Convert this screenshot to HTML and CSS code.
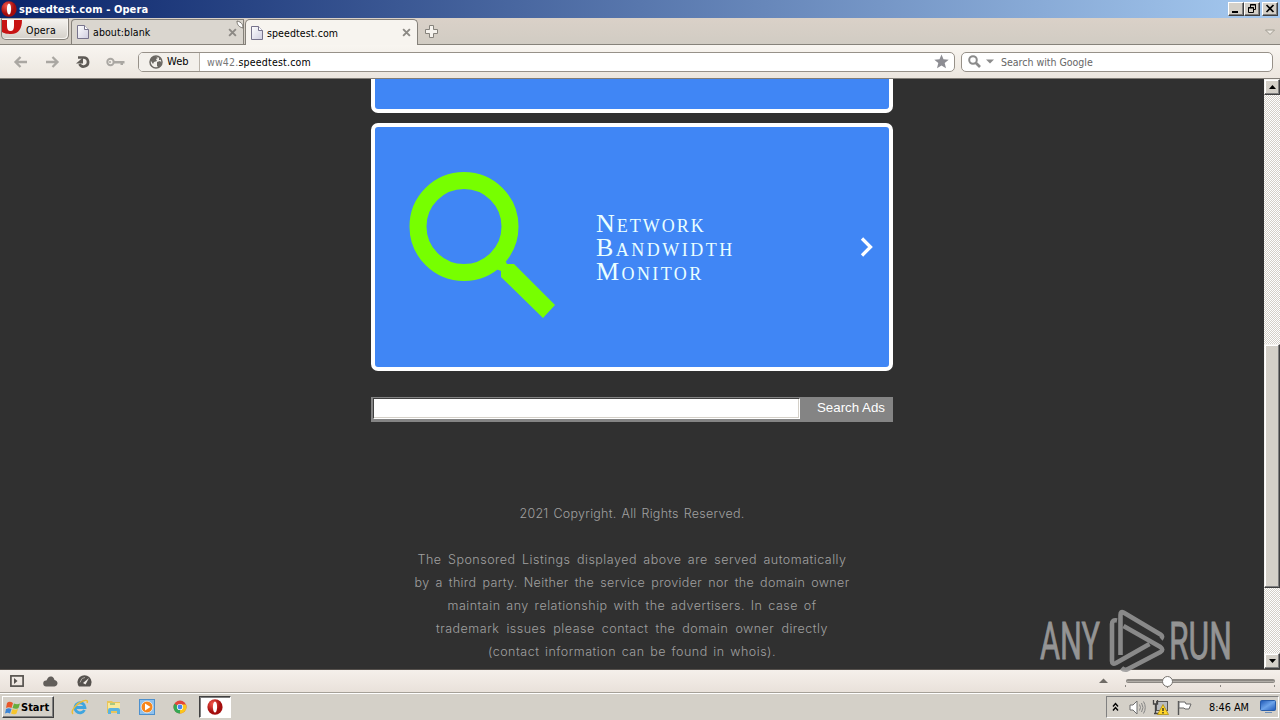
FILE: index.html
```
<!DOCTYPE html>
<html lang="en">
<head>
<meta charset="utf-8">
<title>speedtest.com - Opera</title>
<link rel="stylesheet" href="styles.css">
</head>
<body>
<svg class="defs" width="0" height="0">
  <defs>
    <radialGradient id="red" cx="35%" cy="30%"><stop offset="0" stop-color="#f5584c"/><stop offset="1" stop-color="#a40d0d"/></radialGradient>
    <linearGradient id="page" x2="1" y2="1"><stop offset="0" stop-color="#fff"/><stop offset="1" stop-color="#cfcde0"/></linearGradient>
    <linearGradient id="screen" x2="1" y2="1"><stop offset="0" stop-color="#1c55b4"/><stop offset=".5" stop-color="#6da4ea"/><stop offset="1" stop-color="#1d56b8"/></linearGradient>
    <symbol id="opera" viewBox="0 0 16 16"><ellipse cx="8" cy="8" rx="7.6" ry="7.8" fill="url(#red)"/><ellipse cx="8" cy="8" rx="2.1" ry="5.5" fill="#fff"/></symbol>
    <symbol id="doc" viewBox="0 0 12 14"><path d="M.5.5h7l4 4v9H.5z" fill="url(#page)" stroke="#77738c"/><path d="M7.5.5v4h4" fill="#fff" stroke="#77738c"/></symbol>
    <symbol id="close" viewBox="0 0 8 8"><path d="M1 1l6 6M7 1L1 7" stroke="#8c8984" stroke-width="1.7"/></symbol>
  </defs>
</svg>
<div class="screen">
  <header class="titlebar">
    <svg class="title-logo" width="16" height="16"><use href="#opera"/></svg>
    <span class="title-text">speedtest.com - Opera</span>
    <div class="win-buttons">
      <span class="win-btn"><svg width="14" height="11"><path d="M3 9h6" stroke="#000" stroke-width="2"/></svg></span>
      <span class="win-btn"><svg width="14" height="11"><path d="M5.500 4.500v-3h5v5h-2M5 2h6" fill="none" stroke="#000"/><path d="M3.500 4.500h5v5h-5zM3 5h6" fill="none" stroke="#000"/></svg></span>
      <span class="win-btn last"><svg width="14" height="11"><path d="M3.500 2l7 7M10.500 2l-7 7" stroke="#000" stroke-width="1.700"/></svg></span>
    </div>
  </header>

  <nav class="tabs">
    <div class="menu-btn"><svg width="22" height="17"><path d="M0 0h20c0 8-3 14-11 14-4 0-8-1-9-2z" fill="#c81414"/><path d="M5 0h7v6c0 3-1 5-3.500 5S5 9 5 6z" fill="#fff"/></svg><span>Opera</span></div>
    <div class="tab tab-back"><svg width="12" height="14"><use href="#doc"/></svg><span>about:blank</span><svg class="x" width="9" height="9"><use href="#close"/></svg></div>
    <div class="tab tab-front"><svg width="12" height="14"><use href="#doc"/></svg><span>speedtest.com</span><svg class="x" width="9" height="9"><use href="#close"/></svg>
      <svg class="curl" width="8" height="9"><path d="M1 1c0 4 2 6 6 7 0-3-1-6-6-7z" fill="#fff" stroke="#77736c"/></svg></div>
    <svg class="plus" width="13" height="13"><path d="M4.500.500h4v4h4v4h-4v4h-4v-4h-4v-4h4z" fill="#f6f3ee" stroke="#85827b"/></svg>
    <svg class="closed-tabs" width="10" height="7"><path d="M.500 1h9L5 5.500z" fill="#eeeae3" stroke="#a09c92"/></svg>
  </nav>

  <div class="toolbar">
    <div class="nav-icons">
      <svg width="16" height="14"><path d="M7.500 2L2.500 7l5 5M3 7h11" fill="none" stroke="#aaa7a2" stroke-width="2.300"/></svg>
      <svg width="16" height="14"><path d="M8.500 2l5 5-5 5M13 7H2" fill="none" stroke="#aaa7a2" stroke-width="2.300"/></svg>
      <svg width="16" height="14"><path d="M3 2.500h5.500a4.500 4.500 0 1 1-4 6.500" fill="none" stroke="#5e5a55" stroke-width="2.700"/><path d="M1 8.500h7v-6z" fill="#5e5a55"/></svg>
      <svg width="19" height="14"><circle cx="4.500" cy="7" r="3.200" fill="none" stroke="#aaa7a2" stroke-width="2"/><path d="M7 6h11.500v2.500H17V10h-2.500V8.500H7z" fill="#aaa7a2"/><circle cx="4" cy="7" r="1" fill="#aaa7a2"/></svg>
    </div>
    <div class="address">
      <div class="badge"><svg width="14" height="14"><circle cx="7" cy="7" r="6" fill="#f3f0eb" stroke="#6b6863" stroke-width="1.500"/><path d="M2 3l4-2 3 2-2 1 1 2-3 1-1 2-2-3zM8 7l3-1 2 2-3 5-2-2zM10 2l2 3-2 0z" fill="#6b6863"/></svg><span>Web</span></div>
      <div class="url"><span class="dim">ww42.</span>speedtest.com</div>
      <svg class="star" width="15" height="15"><path d="M7.500.500l2 4.800 5.200.400-4 3.400 1.300 5.200-4.500-2.800L3 14.300l1.300-5.200-4-3.400 5.200-.400z" fill="#8d8d93"/></svg>
    </div>
    <div class="search"><svg width="13" height="13"><circle cx="5" cy="5" r="3.800" fill="none" stroke="#8b8b8b" stroke-width="2"/><path d="M8 8l4 4" stroke="#8b8b8b" stroke-width="2.600"/></svg><svg class="drop" width="8" height="5"><path d="M0 .500h8l-4 4z" fill="#8b8b8b"/></svg><span>Search with Google</span></div>
  </div>

  <div class="viewport">
    <main class="page">
      <section class="card card-cut"></section>
      <section class="card card-main">
        <svg class="glass" width="148" height="148"><circle cx="55" cy="54.500" r="46" fill="none" stroke="#7f0" stroke-width="17"/><path d="M87 97l9-9 2 4h7l41 41-12 13-42-41v-6z" fill="#7f0"/></svg>
        <h2 class="card-title"><span class="t1">Network</span><span class="t2">Bandwidth</span><span class="t3">Monitor</span></h2>
        <svg class="chevron" width="14" height="20"><path d="M2 1.500l8.500 8.500L2 18.500" fill="none" stroke="#fff" stroke-width="3.300"/></svg>
      </section>
      <div class="ads"><div class="ads-input"></div><span>Search Ads</span></div>
      <footer class="legal">
        <p class="l0">2021 Copyright. All Rights Reserved.</p>
        <p class="l1">The Sponsored Listings displayed above are served automatically</p>
        <p class="l2">by a third party. Neither the service provider nor the domain owner</p>
        <p class="l3">maintain any relationship with the advertisers. In case of</p>
        <p class="l4">trademark issues please contact the domain owner directly</p>
        <p class="l5">(contact information can be found in whois).</p>
      </footer>
    </main>
    <aside class="scroll">
      <div class="sb-btn"><svg width="7" height="4"><path d="M0 4h7L3.500 0z"/></svg></div>
      <div class="track-top"></div>
      <div class="thumb"></div>
      <div class="track-bottom"></div>
      <div class="sb-btn"><svg width="7" height="4"><path d="M0 0h7L3.500 4z"/></svg></div>
    </aside>
  </div>

  <div class="status">
    <div class="status-icons">
      <svg width="14" height="12"><rect x=".900" y=".900" width="12.200" height="10.200" fill="none" stroke="#56524e" stroke-width="1.700"/><path d="M4 3v6l3.500-3z" fill="#56524e"/></svg>
      <svg width="15" height="11"><path d="M3.500 10.500a3 3 0 0 1-.500-6C4 5 4 1 7.500.500c3 0 3.500 2 4 3.500 4 .500 4 6 0 6.500z" fill="#625e5a"/></svg>
      <svg width="15" height="12"><path d="M2 11.500A7 7 0 1 1 13 11.500z" fill="#56524e"/><path d="M12 3L8.500 9.500 6 8z" fill="#f1ece7"/><path d="M3 7.500l2-4M5 3.500l3-1" stroke="#aaa59f"/></svg>
    </div>
    <svg class="zoom" width="190" height="22"><path d="M9 13h9l-4.500-4.500z" fill="#6f6b66"/><rect x="36" y="9" width="149" height="4" rx="2" fill="#8c8883"/><path d="M37 11.500h147" stroke="#b2aea8"/><path d="M35.500 15v2M77.500 16v2M130.500 15v2M184.500 15v2" stroke="#8c8883"/><circle cx="77.500" cy="11.500" r="5" fill="#fff" stroke="#77736e"/></svg>
  </div>

  <div class="taskbar">
    <div class="start"><svg width="16" height="15"><path d="M2 3c2-2 4-1 6 0L6.500 8c-2-1-3.500-1-5.500 0z" fill="#e8572a"/><path d="M9 3.500c2 1 4 1 6 0L13.500 8c-2 1.200-4 1-6 0z" fill="#67ae3c"/><path d="M1 9c2-1 3.500-1 5.500 0L5 13.500c-2-1-3-1-5 0z" fill="#3c85d6"/><path d="M7.500 9c2 1 3.500 1 5.500 0l-1.500 4.500c-2 1.200-3.500 1-5.500 0z" fill="#f6c52d"/></svg><span>Start</span></div>
    <div class="quick">
      <svg width="18" height="17"><path d="M13.500 11A5 5 0 1 1 14 8.500H5" fill="none" stroke="#3fa5df" stroke-width="2.800"/><path d="M2 15C-1 12 6 4 12 2c4-1.500 5 0 4 2" fill="none" stroke="#edbd36" stroke-width="1.500"/></svg>
      <svg width="16" height="16"><path d="M1 2h5l1 1h7v11H1z" fill="#e8c55c"/><path d="M2 4h12v7H2z" fill="#f9e99c"/><path d="M2 15v-4q0-2 2-2h8q2 0 2 2v4h-3v-3H5v3z" fill="#5bb3df"/><path d="M4 5h5" stroke="#58a867"/></svg>
      <svg width="16" height="16"><rect x=".500" y=".500" width="15" height="15" fill="#8fc1ed" stroke="#4d90cd"/><circle cx="8" cy="8" r="5.800" fill="#f6861c" stroke="#fff" stroke-width=".600"/><path d="M6 4.500v7L11.500 8z" fill="#fff"/></svg>
      <svg class="i-chrome" width="14" height="14" viewBox="0 0 14 14"><circle cx="7" cy="7" r="6.500" fill="#e2463b"/><path d="M7 7L1.400 3.700A6.500 6.500 0 0 0 7 13.500z" fill="#34a853"/><path d="M7 7L7 13.500A6.500 6.500 0 0 0 13 4.500H7z" fill="#fbc61b"/><circle cx="7" cy="7" r="3.100" fill="#fff"/><circle cx="7" cy="7" r="2.400" fill="#4586ee"/></svg>
    </div>
    <div class="task-active"><svg width="16" height="16"><use href="#opera"/></svg></div>
    <div class="tray">
      <svg width="8" height="10"><path d="M1 4.500l2.500-3 2.500 3M1 8.500l2.500-3 2.500 3" fill="none" stroke="#000" stroke-width="1.400"/></svg>
      <svg class="i-sound" width="17" height="15"><path d="M1 5h3l4-4v13l-4-4H1z" fill="#fff" stroke="#6f6f6f"/><path d="M10.500 4.500q2 3 0 6M12.500 3q3 4.500 0 9M14.500 1.500q3.500 6 0 12" fill="none" stroke="#858585"/></svg>
      <svg class="i-net" width="17" height="16"><rect x="4.500" y="2.500" width="11" height="9" fill="#b9bcc0" stroke="#555"/><path d="M1.500 1v4h4V1M3.500 5v10M2 14.500h8" fill="none" stroke="#444" stroke-width="1.300"/><path d="M11 5.500l5.500 10h-11z" fill="#ffd528" stroke="#a98600" stroke-width=".700"/><path d="M11 9v3M11 13v1.500" stroke="#222" stroke-width="1.300"/></svg>
      <svg class="i-flag" width="17" height="15"><path d="M2.500 1v14" stroke="#555" stroke-width="1.400"/><path d="M3 2h6l1 2h5l-2 5H9L8 8H3z" fill="#fff" stroke="#666"/></svg>
      <span class="clock">8:46 AM</span>
      <svg class="i-desk" width="16" height="14"><rect x=".500" y=".500" width="15" height="10" rx="1" fill="url(#screen)" stroke="#285ca8"/><path d="M5 12.500h7" stroke="#6e8fb8"/></svg>
    </div>
  </div>

  <svg class="watermark" width="210" height="84">
    <g fill="#a6a6a6"><text x="4" y="51" textLength="60" lengthAdjust="spacingAndGlyphs">ANY</text><text x="133" y="51" textLength="63" lengthAdjust="spacingAndGlyphs">RUN</text></g>
    <g fill="none" stroke="#999" stroke-width="4.600" stroke-linejoin="round"><path d="M84.500 47V7q0-4 3-2.500l37 22q3 2 .500 4.500M87.500 15.500"/><path d="M86 26l36 20" stroke="none"/><path d="M88 28l36 8q4 2 1 6L91 61q-3 1.500-5-1" stroke="none"/><path d="M87.500 18l37 21q3.500 2.500 0 5L91 61.500q-3 1-5.500-1.500"/><path d="M80.500 20q-4 0-4 3v27q0 4 4 2l34-20" stroke="none"/><path d="M81 12.500q-5-1-5 3.500v37q0 4 4 2l33.500-19"/></g>
  </svg>
</div>
</body>
</html>
```
FILE: styles.css
```
* { box-sizing: border-box; }
body { margin: 0; background: #303030; font-family: "DejaVu Sans Condensed", "DejaVu Sans", sans-serif; font-stretch: condensed; font-size: 10.5px; color: #000; }
svg { display: block; flex: none; }
.defs { position: absolute; }
.screen { position: relative; width: 1280px; height: 720px; overflow: hidden; display: flex; flex-direction: column; }
span { white-space: nowrap; }

.titlebar { height: 18px; flex: none; display: flex; align-items: center; padding: 0 2px 0 1px; background: linear-gradient(90deg, #0a246a, #a6caf0); }
.title-text { margin-left: 2px; color: #fff; font-weight: bold; font-size: 11px; line-height: 16px; padding-top: 1px; letter-spacing: .1px; }
.win-buttons { margin-left: auto; display: flex; }
.win-btn { width: 16px; height: 14px; background: #d4d0c8; border: 1px solid; border-color: #fff #404040 #404040 #fff; box-shadow: inset -1px -1px #808080; overflow: hidden; }
.win-btn.last { margin-left: 2px; }

.tabs { height: 27px; flex: none; display: flex; align-items: flex-start; background: linear-gradient(#dad1c8, #d1ccc3); border-bottom: 1px solid #86827a; }
.menu-btn { position: relative; width: 68px; height: 22px; margin-left: 1px; padding-left: 24px; line-height: 23px; border: 1px solid #85817a; border-radius: 0 0 5px 5px; border-top-color: #b4afa7; background: linear-gradient(#f5f3ef, #d4d0c9); box-shadow: inset -1px -1px #f6f4f0; overflow: hidden; letter-spacing: .2px; }
.menu-btn svg { position: absolute; left: 0; top: 1px; }
.tab { display: flex; align-items: center; padding-left: 5px; border: 1px solid #85817a; border-bottom: 0; margin-top: 1px; }
.tab span { margin-left: 4px; letter-spacing: .1px; }
.tab .x { margin-left: auto; }
.tab-back { width: 173px; height: 25px; margin-left: 2px; padding-right: 6px; background: #dad6cf; border-radius: 4px 0 0 0; }
.tab-front { position: relative; width: 173px; height: 26px; padding-right: 6px; background: #f7f4ef; border-radius: 5px 5px 0 0; margin-left: 1px; }
.curl { position: absolute; left: -10px; top: 0; }
.plus { margin: 7px 0 0 7px; }
.closed-tabs { margin: 11px 5px 0 auto; }

.toolbar { height: 34px; flex: none; display: flex; align-items: center; padding-right: 7px; background: linear-gradient(#f8f5f0, #ece6df); border-bottom: 1px solid #817d77; }
.nav-icons { width: 138px; display: flex; padding-left: 13px; gap: 15px; }
.address { display: flex; align-items: center; width: 817px; height: 20px; background: #fff; border: 1px solid #979189; border-radius: 5px; }
.badge { display: flex; align-items: center; width: 61px; height: 18px; padding-left: 10px; background: #f3f0eb; border-right: 1px solid #b9b3aa; border-radius: 4px 0 0 4px; }
.badge span { margin-left: 4px; font-size: 11px; }
.url { margin-left: 7px; letter-spacing: .2px; }
.dim { color: #777; }
.star { margin: 0 5px 0 auto; }
.search { display: flex; align-items: center; width: 312px; height: 20px; margin-left: 6px; padding-left: 6px; background: #fff; border: 1px solid #979189; border-radius: 5px; color: #666; }
.drop { margin: 0 7px 0 5px; }

.viewport { height: 591px; flex: none; display: flex; background: #303030; border-bottom: 1px solid #55504c; }
.page { width: 1264px; padding-left: 371px; }
.card { width: 522px; background: #4086f5; border: 4px solid #fff; border-radius: 7px; }
.card-cut { height: 34px; border-top: 0; border-radius: 0 0 7px 7px; }
.card-main { height: 248px; margin-top: 10px; display: flex; align-items: center; padding: 0 15px 0 34px; }
.glass { margin-top: -3px; }
.card-title { margin: 2px 0 0 39px; display: flex; flex-direction: column; font: small-caps 400 26px/24px "Liberation Serif", serif; color: #eaffff; }
.t1 { letter-spacing: 2px; }
.t2 { letter-spacing: 2.5px; }
.t3 { letter-spacing: 2.4px; }
.chevron { margin-left: auto; }
.ads { display: flex; width: 522px; height: 25px; margin-top: 26px; padding: 1px 8px 0 2px; background: #848484; color: #fff; font: 13.3px/19px "Liberation Sans", sans-serif; justify-content: space-between; }
.ads-input { width: 427px; height: 21px; background: #fff; border: 1px solid #404040; border-right-color: #fff; border-bottom-color: #fff; box-shadow: inset -1px -1px #d4d0c8; }
.legal { display: flex; flex-direction: column; align-items: center; width: 522px; margin-top: 80px; font: 300 12.5px/23px "Inter", "Lato", sans-serif; color: #a0a0a0; letter-spacing: .5px; }
.legal p { margin: 0; white-space: nowrap; text-align: justify; text-align-last: justify; }
.legal .l0 { width: 225px; margin-bottom: 23px; letter-spacing: .25px; }
.l1 { width: 429px; }
.legal .l2 { width: 435px; letter-spacing: .35px; }
.l3 { width: 369px; }
.l4 { width: 392px; }
.l5 { width: 288px; }

.scroll { width: 16px; display: flex; flex-direction: column; background: repeating-conic-gradient(#fff 0 25%, #d4d0c8 0 50%) 0 0 / 2px 2px; }
.sb-btn, .thumb { background: #d4d0c8; border: 1px solid; border-color: #f4f2ee #404040 #404040 #f4f2ee; box-shadow: inset -1px -1px #808080, inset 1px 1px #fff; }
.sb-btn { height: 16px; flex: none; display: flex; align-items: center; justify-content: center; }
.track-top { height: 249px; }
.thumb { height: 244px; }
.track-bottom { flex: 1; }

.status { height: 23px; flex: none; display: flex; justify-content: space-between; background: linear-gradient(#f5f0eb, #e9e1da); border-bottom: 1px solid #a5a098; }
.status-icons { display: flex; align-items: center; padding-left: 10px; gap: 19px; }

.taskbar { height: 27px; flex: none; display: flex; align-items: center; padding: 0 2px; background: #d4d0c8; border-top: 1px solid #fff; }
.start { width: 52px; height: 22px; display: flex; align-items: center; padding-left: 2px; border: 1px solid; border-color: #fff #404040 #404040 #fff; box-shadow: inset -1px -1px #808080; font-weight: bold; font-size: 11px; }
.quick { width: 145px; display: flex; align-items: center; padding-left: 17px; gap: 17px; }
.i-chrome { margin-left: 1px; }
.task-active { width: 32px; height: 22px; display: flex; align-items: center; justify-content: center; background: #fff; border: 1px solid; border-color: #404040 #fff #fff #404040; box-shadow: inset 1px 1px #808080; }
.tray { display: flex; align-items: center; width: 173px; height: 22px; margin-left: auto; margin-right: -1px; padding-left: 5px; border: 1px solid; border-color: #808080 #fff #fff #808080; }
.i-sound { margin-left: 9px; }
.i-net { margin-left: 6px; }
.i-flag { margin-left: 7px; }
.clock { margin-left: 16px; font-size: 10.8px; }
.i-desk { margin-left: auto; margin-right: 2px; }

.watermark { position: absolute; left: 1036px; top: 608px; opacity: .85; }
.watermark text { font: 400 51px Roboto, sans-serif; stroke: #a6a6a6; stroke-width: .8px; }
```
